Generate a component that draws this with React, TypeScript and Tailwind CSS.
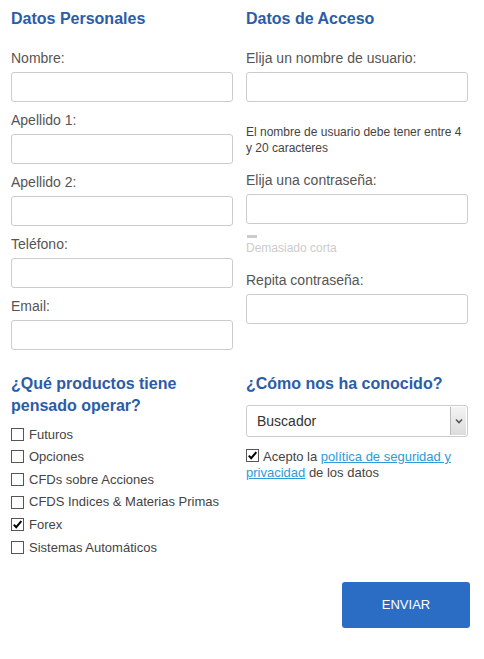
import React from "react";

const Check = ({ checked }: { checked?: boolean }) => (
  <span className="relative inline-flex h-[13px] w-[13px] shrink-0 items-center justify-center border border-[#555] bg-white">
    {checked && (
      <svg width="11" height="11" viewBox="0 0 11 11" className="absolute left-[0px] top-[0px]">
        <path d="M1.8 5.6 L4.2 8.2 L9.3 2.2" fill="none" stroke="#000" strokeWidth="2" />
      </svg>
    )}
  </span>
);

const Field = ({ label }: { label: string }) => (
  <div className="flex flex-col">
    <label className="h-[20px] text-[14px] leading-[20px] text-[#555]">{label}</label>
    <input className="mt-[4px] h-[30px] w-full rounded-[3px] border border-[#ccc] bg-white" />
  </div>
);

export default function App() {
  const products = [
    { name: "Futuros" },
    { name: "Opciones" },
    { name: "CFDs sobre Acciones" },
    { name: "CFDS Indices & Materias Primas" },
    { name: "Forex", checked: true },
    { name: "Sistemas Automáticos" },
  ];
  return (
    <div
      className="w-[484px] min-h-[659px] bg-white pl-[11px] pt-[9px]"
      style={{ fontFamily: '"Liberation Sans", Arial, sans-serif' }}
    >
      <div className="grid grid-cols-[222px_222px] gap-x-[13px]">
        {/* Datos Personales */}
        <div className="flex flex-col">
          <h2 className="text-[16px] font-bold leading-[20px] text-[#2b5ca8]">Datos Personales</h2>
          <div className="mt-[19px] flex flex-col gap-[8px]">
            <Field label="Nombre:" />
            <Field label="Apellido 1:" />
            <Field label="Apellido 2:" />
            <Field label="Teléfono:" />
            <Field label="Email:" />
          </div>
        </div>
        {/* Datos de Acceso */}
        <div className="flex flex-col">
          <h2 className="text-[16px] font-bold leading-[20px] text-[#2b5ca8]">Datos de Acceso</h2>
          <div className="mt-[19px]">
            <Field label="Elija un nombre de usuario:" />
          </div>
          <p className="mt-[22px] text-[12px] leading-[16px] text-[#444]">
            El nombre de usuario debe tener entre 4 y 20 caracteres
          </p>
          <div className="mt-[14px]">
            <Field label="Elija una contraseña:" />
          </div>
          <div className="ml-[1px] mt-[11px] h-[3px] w-[10px] bg-[#ccc]" />
          <p className="mt-[3px] text-[12px] leading-[15px] text-[#ccc]">Demasiado corta</p>
          <div className="mt-[14px]">
            <Field label="Repita contraseña:" />
          </div>
        </div>
      </div>

      <div className="mt-[23px] grid grid-cols-[222px_222px] gap-x-[13px]">
        <div className="flex flex-col">
          <h2 className="text-[16px] font-bold leading-[22px] text-[#2b5ca8]">
            ¿Qué productos tiene pensado operar?
          </h2>
          <div className="mt-[6px] flex flex-col">
            {products.map((p) => (
              <label key={p.name} className="flex h-[22.6px] items-center gap-[5px] text-[13px] text-[#444]">
                <Check checked={p.checked} />
                <span>{p.name}</span>
              </label>
            ))}
          </div>
        </div>
        <div className="flex flex-col">
          <h2 className="text-[16px] font-bold leading-[22px] text-[#2b5ca8]">¿Cómo nos ha conocido?</h2>
          <div className="mt-[10px] flex h-[32px] w-full items-stretch rounded-[3px] border border-[#ccc] bg-white">
            <div className="flex flex-1 items-center pl-[10px] text-[14px] text-[#333]">Buscador</div>
            <div className="m-[1px] flex w-[16px] items-center justify-center border-l border-[#bbb] bg-gradient-to-b from-[#f4f4f4] to-[#dcdcdc]">
              <svg width="8" height="6" viewBox="0 0 8 6">
                <path d="M1 1.5 L4 4.5 L7 1.5" fill="none" stroke="#555" strokeWidth="1.6" />
              </svg>
            </div>
          </div>
          <div className="mt-[11px] text-[13px] leading-[16px] text-[#444]">
            <span className="mr-[4px] inline-flex translate-y-[1px] align-baseline">
              <Check checked />
            </span>
            Acepto la{" "}
            <a className="text-[#2e9bd6] underline" href="#">
              política de seguridad y privacidad
            </a>{" "}
            de los datos
          </div>
        </div>
      </div>

      <div className="mt-[23px] flex justify-end pr-[14px]">
        <button className="h-[46px] w-[128px] rounded-[3px] bg-[#2b6dc4] text-[13px] text-white">ENVIAR</button>
      </div>
    </div>
  );
}
